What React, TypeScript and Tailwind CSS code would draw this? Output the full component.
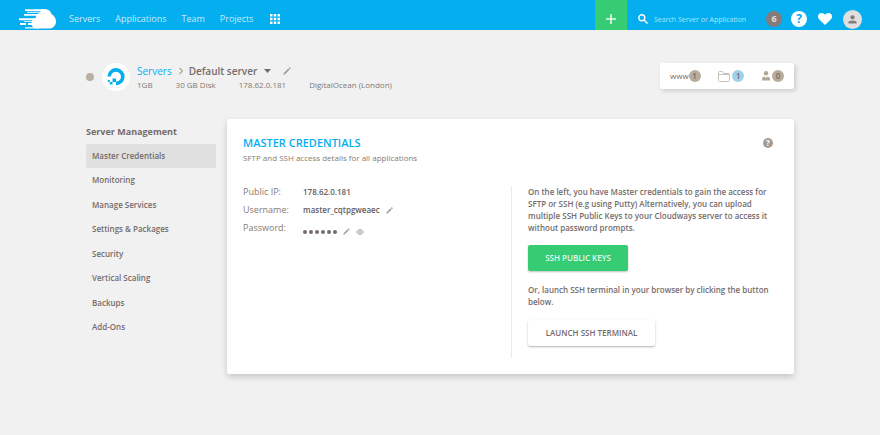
import React from "react";

const menu = [
  "Master Credentials",
  "Monitoring",
  "Manage Services",
  "Settings & Packages",
  "Security",
  "Vertical Scaling",
  "Backups",
  "Add-Ons",
];

function CloudLogo() {
  return (
    <svg viewBox="0 0 38 20" className="h-5 w-[38px]" fill="#fff" aria-label="Cloudways">
      <path d="M22 0.300H27C29.500 0.500 31.500 2 32.500 5C35.500 7 37 9.500 37 13C36.500 17 34 19.500 30 19.500H18C14.500 19.500 12.500 17.500 12.500 14C12.500 11.500 14 9.500 16.500 9C17 6 19 4.500 21 4Z" />
      <path d="M6 0.300H27V2H6zM5 5H20V6.800H5zM8 2.800H23V3.800H8zM0 9.200H17V11.200H0zM5 12.200H14V13H5zM1 14H7V16H1zM9 14H14V16H9zM6 18.200H20V19.500H6z" />
    </svg>
  );
}

function Pencil({ className }: { className: string }) {
  return (
    <svg viewBox="0 0 8 8" className={className} fill="#a59e95">
      <path d="M0.300 7.700L0.800 5.900L5.200 1.500L6.500 2.800L2.100 7.200ZM5.700 1L6.300 0.300Q6.500 0.100 6.800 0.300L7.700 1.200Q7.900 1.500 7.700 1.700L7 2.300Z" />
    </svg>
  );
}

function Header() {
  return (
    <header className="flex h-[30px] items-center bg-[#04aeef] text-[9px] text-[#c8ebfb]">
      <a href="#" className="ml-[19px] mt-2">
        <CloudLogo />
      </a>
      <nav className="ml-3 mt-2 flex items-center gap-[15px] leading-[14px]">
        <a href="#">Servers</a>
        <a href="#">Applications</a>
        <a href="#">Team</a>
        <a href="#">Projects</a>
        <button aria-label="Apps" className="ml-[2px]">
          <svg viewBox="0 0 10 10" className="size-[10px]" fill="#fff">
            <path d="M0 0h2.500v2.500H0zM3.750 0h2.500v2.500h-2.500zM7.500 0H10v2.500H7.500zM0 3.750h2.500v2.500H0zM3.750 3.750h2.500v2.500h-2.500zM7.500 3.750H10v2.500H7.500zM0 7.500h2.500V10H0zM3.750 7.500h2.500V10h-2.500zM7.500 7.500H10V10H7.500z" />
          </svg>
        </button>
      </nav>
      <button aria-label="Add" className="ml-auto flex h-full w-8 items-center justify-center bg-[#35cc74] pt-2">
        <svg viewBox="0 0 10 10" className="size-[10px]" stroke="#e8f9ef" strokeWidth="1.600">
          <path d="M5 0V10M0 5H10" />
        </svg>
      </button>
      <div className="mr-[18px] flex items-center pt-2">
        <svg viewBox="0 0 10 10" className="ml-[11px] size-[10px]" fill="none" stroke="#fff" strokeWidth="1.400">
          <circle cx="3.800" cy="3.800" r="3" />
          <path d="M6 6L9.500 9.500" />
        </svg>
        <input
          aria-label="Search"
          placeholder="Search Server or Application"
          className="ml-[6px] h-4 w-[103px] bg-transparent text-[7px] outline-none placeholder:text-[#b5e4fa]"
        />
        <span className="ml-[9px] flex size-4 items-center justify-center rounded-full bg-[#857b7b] text-[9px] font-bold text-[#e6e0d5]">
          6
        </span>
        <button aria-label="Help" className="ml-[9px] flex size-4 items-center justify-center rounded-full bg-white text-[12px] font-bold leading-4 text-[#04aeef]">
          ?
        </button>
        <button aria-label="Favourites" className="ml-[11px]">
          <svg viewBox="0 0 14 12" className="h-3 w-[14px]" fill="#fff">
            <path d="M7 12L1.300 6.600C-1.500 3.500 0.500 0 3.600 0C5.200 0 6.300 0.700 7 1.800C7.700 0.700 8.800 0 10.400 0C13.500 0 15.500 3.500 12.700 6.600Z" />
          </svg>
        </button>
        <button aria-label="Account" className="ml-[11px] flex size-[19px] items-center justify-center rounded-full bg-[#dfdfdf]">
          <svg viewBox="0 0 10 10" className="size-[9px]" fill="#857b7b">
            <circle cx="5" cy="2.600" r="2.400" />
            <path d="M0.500 9.500V8Q1 6 5 6Q9 6 9.500 8V9.500Z" />
          </svg>
        </button>
      </div>
    </header>
  );
}

function ServerBar() {
  return (
    <section className="flex items-start">
      <span className="mt-[10px] size-2 rounded-full bg-[#b8b0a0]" />
      <span className="ml-2 flex size-7 items-center justify-center rounded-full bg-white">
        <svg viewBox="0 0 18 18" className="size-[18px]">
          <path d="M9 15.500A6.800 6.800 0 1 0 2.200 8.500" fill="none" stroke="#04aeef" strokeWidth="3.600" />
          <path d="M5.500 10.500H9V14H5.500zM2.800 14H5.500V16.500H2.800zM0.800 12H2.800V14H0.800z" fill="#04aeef" />
        </svg>
      </span>
      <div className="ml-[7px]">
        <div className="flex h-4 items-center leading-4">
          <a href="#" className="text-[10px] text-[#04aeef]">Servers</a>
          <svg viewBox="0 0 4 8" className="ml-[7px] h-2 w-1" fill="none" stroke="#a8a198" strokeWidth="1.200">
            <path d="M0.500 1L3.500 4L0.500 7" />
          </svg>
          <h1 className="ml-[6px] text-[10px] font-semibold text-[#756b6b]">Default server</h1>
          <button aria-label="Choose server" className="ml-[7px]">
            <svg viewBox="0 0 7 4" className="h-1 w-[7px]" fill="#756b6b">
              <path d="M0 0H7L3.500 4Z" />
            </svg>
          </button>
          <button aria-label="Rename server" className="ml-3">
            <Pencil className="size-[8px]" />
          </button>
        </div>
        <div className="flex gap-[23px] text-[8px] leading-[12px] text-[#82796f]">
          <span>1GB</span>
          <span>30 GB Disk</span>
          <span>178.62.0.181</span>
          <span>DigitalOcean (London)</span>
        </div>
      </div>
      <div className="ml-auto flex h-[26px] w-[134px] items-center justify-between rounded-[2px] bg-white px-[10px] text-[8px] text-[#756b6b] shadow-[2px_2px_4px_rgba(0,0,0,0.15)]">
        <span className="flex items-center">
          www
          <b className="flex size-3 items-center justify-center rounded-full bg-[#b8ad9d] font-semibold">1</b>
        </span>
        <span className="flex items-center gap-[2px]">
          <svg viewBox="0 0 12 11" className="h-[11px] w-3" fill="none" stroke="#c8c3bb">
            <path d="M0.500 9.500V1.500Q0.500 0.500 1.500 0.500H4.500L5.500 2.500H10.500Q11.500 2.500 11.500 3.500V9.500Q11.500 10.500 10.500 10.500H1.500Q0.500 10.500 0.500 9.500ZM0.500 3.500H11" />
          </svg>
          <b className="flex size-3 items-center justify-center rounded-full bg-[#9fd0ea] font-semibold">1</b>
        </span>
        <span className="flex items-center gap-[2px]">
          <svg viewBox="0 0 8 10" className="h-[10px] w-2" fill="#b0a796">
            <circle cx="4" cy="2.300" r="2.200" />
            <path d="M0 9.500V7.500Q0.500 6 2.500 5.500L4 7L5.500 5.500Q7.500 6 8 7.500V9.500Z" />
          </svg>
          <b className="flex size-3 items-center justify-center rounded-full bg-[#b8ad9d] font-semibold">0</b>
        </span>
      </div>
    </section>
  );
}

function Sidebar() {
  return (
    <aside className="w-[130px] shrink-0 pt-[5px]">
      <h2 className="text-[9px] font-bold leading-4 text-[#756b6b]">Server Management</h2>
      <nav className="mt-1 flex h-[195px] flex-col justify-between">
        {menu.map((item, i) => (
          <a
            key={item}
            href="#"
            className={
              "flex h-6 items-center rounded-[2px] px-[6px] text-[8px] font-semibold text-[#756b6b] " +
              (i === 0 ? "bg-[#dfe0df]" : "")
            }
          >
            {item}
          </a>
        ))}
      </nav>
    </aside>
  );
}

function Credentials() {
  return (
    <main className="min-w-0 flex-1 rounded-[2px] bg-white px-4 pb-4 pt-4 shadow-[0_3px_6px_rgba(0,0,0,0.18)]">
      <div className="flex items-center justify-between pr-1">
        <h2 className="text-[11px] font-semibold leading-4 text-[#04aeef]">MASTER CREDENTIALS</h2>
        <button aria-label="Help" className="mr-px flex size-[10px] items-center justify-center rounded-full bg-[#a29b94] text-[8px] font-bold leading-[10px] text-white">
          ?
        </button>
      </div>
      <p className="text-[8px] leading-[14px] text-[#857b70]">SFTP and SSH access details for all applications</p>
      <div className="mt-[21px] flex">
        <dl className="grid flex-1 grid-cols-[60px_1fr] content-start gap-y-[6px] text-[8px] font-semibold leading-[12px] text-[#665c5c]">
          <dt className="text-[9px] font-normal text-[#857b70]">Public IP:</dt>
          <dd>178.62.0.181</dd>
          <dt className="text-[9px] font-normal text-[#857b70]">Username:</dt>
          <dd className="flex items-center">
            master_cqtpgweaec
            <button aria-label="Edit username" className="ml-[6px]">
              <Pencil className="size-[7px]" />
            </button>
          </dd>
          <dt className="text-[9px] font-normal text-[#857b70]">Password:</dt>
          <dd className="flex items-center pt-[6px]">
            <span className="flex gap-[2px]" aria-label="Hidden password">
              {[0, 1, 2, 3, 4, 5].map((n) => (
                <i key={n} className="size-1 rounded-full bg-[#756b6b]" />
              ))}
            </span>
            <button aria-label="Edit password" className="ml-[6px]">
              <Pencil className="size-[7px]" />
            </button>
            <button aria-label="Show password" className="ml-[6px]">
              <svg viewBox="0 0 8 6" className="h-[6px] w-2" fill="none" stroke="#9b948b">
                <path d="M0.500 3Q4 -1.800 7.500 3Q4 7.800 0.500 3Z" />
                <circle cx="4" cy="3" r="0.800" />
              </svg>
            </button>
          </dd>
        </dl>
        <div className="w-[267px] border-l border-[#ebebeb] pb-3 pl-4 text-[8px] font-semibold leading-[12px] text-[#756b6b]">
          <p>
            On the left, you have Master credentials to gain the access for SFTP or SSH (e.g using Putty) Alternatively, you
            can upload multiple SSH Public Keys to your Cloudways server to access it without password prompts.
          </p>
          <button className="mt-[11px] block h-[26px] w-[100px] rounded-[2px] bg-[#35cc74] text-[#e8f9ef] shadow-[0_1px_2px_rgba(0,0,0,0.25)]">
            SSH PUBLIC KEYS
          </button>
          <p className="mt-[13px]">Or, launch SSH terminal in your browser by clicking the button below.</p>
          <button className="mt-3 block h-[26px] w-[127px] rounded-[2px] bg-white shadow-[0_1px_2px_rgba(0,0,0,0.3)]">
            LAUNCH SSH TERMINAL
          </button>
        </div>
      </div>
    </main>
  );
}

export default function App() {
  return (
    <div className="min-h-screen bg-[#f1f1f1] font-['Open_Sans','Noto_Sans',sans-serif]">
      <Header />
      <div className="mx-auto max-w-[708px] pt-[33px]">
        <ServerBar />
        <div className="mt-7 flex items-start gap-[11px]">
          <Sidebar />
          <Credentials />
        </div>
      </div>
    </div>
  );
}
